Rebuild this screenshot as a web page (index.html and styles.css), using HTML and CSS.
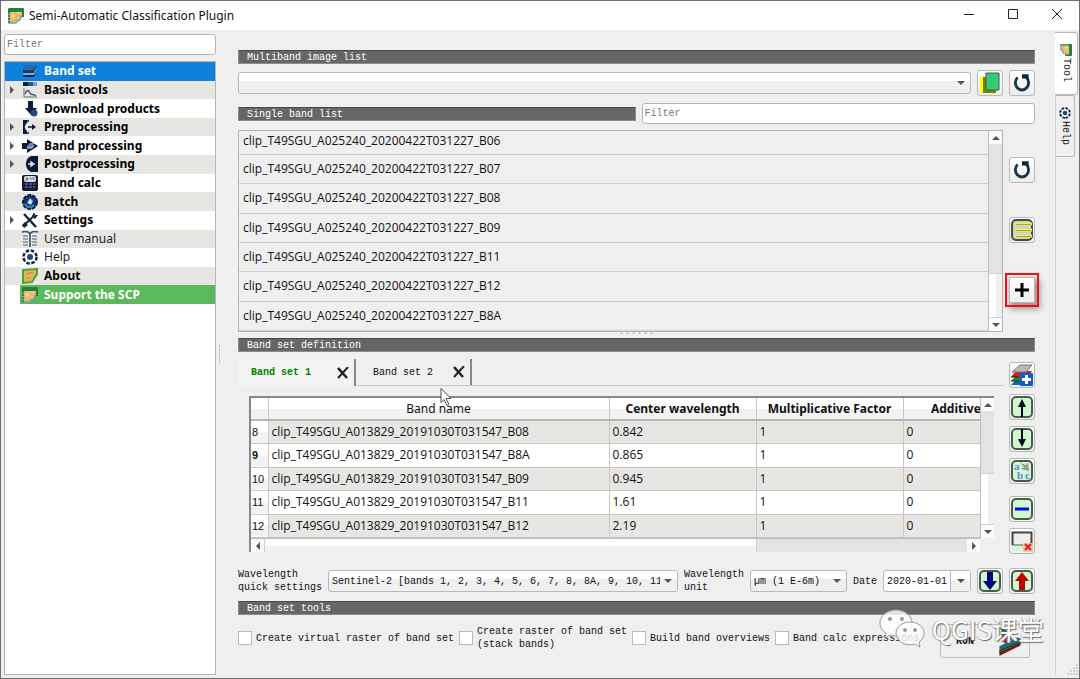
FILE: index.html
```html
<!DOCTYPE html>
<html lang="en">
<head>
  <meta charset="UTF-8">
  <title>Semi-Automatic Classification Plugin</title>
  <meta name="viewport" content="width=device-width, initial-scale=1.0">
  <link rel="stylesheet" href="styles.css">
</head>
<body>
  <svg class="defs" aria-hidden="true">
    <symbol id="logo" viewBox="0 0 16 16">
      <path d="M1 1h14v7l-2 1-1 3-3 1-1 2H1z" fill="#e9b565" stroke="#6fa3ae" stroke-width="1.500"/>
      <path d="M0 4V1l1-1h14l1 1v8h-2V4z" fill="#23823a"/>
      <path d="M1 4v11" stroke="#2f8a56" stroke-width="2" stroke-dasharray="2 1"/>
      <path d="M5 5v6M3 8h5M8 5h4M9 10h2" stroke="#fbe8b4"/>
    </symbol>
    <symbol id="bandset" viewBox="0 0 16 16">
      <path d="M1 11l4-4h10l-3 7H1z" fill="#0b2548"/>
      <path d="M1 10l4-3h10l-3 5H1z" fill="#7ba9df"/>
      <path d="M1 7l4-5h10l-3 8H1z" fill="#163e70"/>
      <path d="M1 7l4-5h10l-3 5z" fill="#2d66a6"/>
    </symbol>
    <symbol id="basic" viewBox="0 0 16 16">
      <path d="M1 0h5v4H1z" fill="#0b1d3c"/><path d="M6 0h5v4H6z" fill="#24508d"/><path d="M11 0h4v4h-4z" fill="#7b9dcb"/>
      <path d="M2 6v9h13" fill="none" stroke="#5e7186"/>
      <path d="M3 12c2-5 4-4 5-1s3 0 6 3" fill="none" stroke="#37536f" stroke-width="1.300"/>
    </symbol>
    <symbol id="download" viewBox="0 0 16 16">
      <path d="M6 0h5v7h4l-6 7-6-7h3z" fill="#0c1c35"/><circle cx="12" cy="12" r="3.500" fill="#254b73"/>
    </symbol>
    <symbol id="pre" viewBox="0 0 16 16">
      <path d="M1 1h4v3c-3 3-3 5 0 8v3H1z" fill="#0a1a33"/>
      <path d="M4 2h3M4 14h3M6 8h6" stroke="#0a1a33" stroke-width="1.500"/><path d="M10 5l4 3-4 3z" fill="#0a1a33"/>
    </symbol>
    <symbol id="proc" viewBox="0 0 16 16">
      <path d="M0 5h5V1l11 7-11 7v-4H0z" fill="#0b1c33"/>
      <path d="M5 8l3-3h4l-2 5H5z" fill="#6b88ad"/><path d="M5 10h5l2-3" fill="none" stroke="#c9d7e8"/>
    </symbol>
    <symbol id="post" viewBox="0 0 16 16">
      <path d="M16 0v16h-6c-8-1-8-15 0-16z" fill="#0a1a33"/><path d="M6 8h5M9 6l3 2-3 2z" fill="#d4e0e8" stroke="#d4e0e8" stroke-width="1.500"/>
    </symbol>
    <symbol id="calc" viewBox="0 0 16 16">
      <rect x="0" y="0" width="16" height="16" rx="2" fill="#141b32"/>
      <rect x="2" y="1" width="12" height="6" rx="2" fill="#d8dde4"/>
      <path d="M4 3h2v2H4zM8 3h1v2M10 3h2v2" fill="none" stroke="#68718b"/>
      <path d="M3 9h3M7 9h3M11 9h2M3 12h3M7 12h3M11 12h2" stroke="#4a5090" stroke-width="2"/>
    </symbol>
    <symbol id="batch" viewBox="0 0 16 16">
      <circle cx="8" cy="8" r="7" fill="#123768" stroke="#0a2142" stroke-width="2" stroke-dasharray="4 1"/>
      <path d="M3 10c2 4 6 4 9 1" fill="none" stroke="#3b82ce" stroke-width="2"/>
      <path d="M8 4l3 3-2 4-4-2z" fill="#9cc7f0"/><circle cx="8" cy="8" r="1.500" fill="#fff"/>
    </symbol>
    <symbol id="tools" viewBox="0 0 16 16">
      <path d="M2 2l12 13" stroke="#172536" stroke-width="2.500"/><path d="M1 14L13 3" stroke="#172536" stroke-width="2"/>
      <path d="M0 13l3-3 3 3-4 3zM10 4l2-4 1 3 3 0-3 4z" fill="#172536"/>
    </symbol>
    <symbol id="manual" viewBox="0 0 16 16">
      <path d="M0 1c4-1 7 0 8 2 1-2 4-3 8-2M8 3v13" fill="none" stroke="#365064" stroke-width="1.600"/>
      <path d="M1 5h5M1 8h5M1 11h5M1 14h5M10 5h5M10 8h5M10 11h5M10 14h5" stroke="#7f929c" stroke-width="1.500"/>
    </symbol>
    <symbol id="helpring" viewBox="0 0 16 16">
      <circle cx="8" cy="8" r="6.500" fill="none" stroke="#102642" stroke-width="2.500" stroke-dasharray="3.500 1.600"/>
      <circle cx="8" cy="8" r="3" fill="#23466b"/>
    </symbol>
    <symbol id="about" viewBox="0 0 16 16">
      <path d="M1 2l14-1v5l-5 8-9 1z" fill="#e4b25c" stroke="#4ba72f" stroke-width="2"/>
      <path d="M4 6l3-1 4 0M5 10l3 0" stroke="#c48b48" fill="none"/>
    </symbol>
    <symbol id="reload" viewBox="0 0 20 20">
      <path d="M6 5a6 6.500 0 1 0 8 0" fill="none" stroke="#17384c" stroke-width="2.600"/>
      <path d="M10 2h6v6l-2-2h-4z" fill="#10283a"/>
    </symbol>
    <symbol id="cross" viewBox="0 0 12 12">
      <path d="M1 1l9 10" stroke="#222" stroke-width="2.600"/><path d="M11 0L1 11" stroke="#222" stroke-width="2"/>
    </symbol>
  </svg>

  <div class="window">
    <header class="titlebar">
      <svg class="icon"><use href="#logo"/></svg>
      <h1>Semi-Automatic Classification Plugin</h1>
      <button class="win-btn" aria-label="Minimize"><svg viewBox="0 0 12 12"><path d="M1 6.500h10"/></svg></button>
      <button class="win-btn" aria-label="Maximize"><svg viewBox="0 0 12 12"><path d="M1.500 1.500h9v9h-9z"/></svg></button>
      <button class="win-btn" aria-label="Close"><svg viewBox="0 0 12 12"><path d="M1 1l10 10M11 1L1 11"/></svg></button>
    </header>

    <div class="content">
      <aside class="sidebar">
        <input type="text" class="text-input" placeholder="Filter" aria-label="Filter tools">
        <nav class="tree">
          <ul>
            <li class="selected"><a href="#"><svg class="icon"><use href="#bandset"/></svg>Band set</a></li>
            <li class="branch"><a href="#"><svg class="icon"><use href="#basic"/></svg>Basic tools</a></li>
            <li><a href="#"><svg class="icon"><use href="#download"/></svg>Download products</a></li>
            <li class="branch"><a href="#"><svg class="icon"><use href="#pre"/></svg>Preprocessing</a></li>
            <li class="branch"><a href="#"><svg class="icon"><use href="#proc"/></svg>Band processing</a></li>
            <li class="branch"><a href="#"><svg class="icon"><use href="#post"/></svg>Postprocessing</a></li>
            <li><a href="#"><svg class="icon"><use href="#calc"/></svg>Band calc</a></li>
            <li><a href="#"><svg class="icon"><use href="#batch"/></svg>Batch</a></li>
            <li class="branch"><a href="#"><svg class="icon"><use href="#tools"/></svg>Settings</a></li>
            <li class="light"><a href="#"><svg class="icon"><use href="#manual"/></svg>User manual</a></li>
            <li class="light"><a href="#"><svg class="icon"><use href="#helpring"/></svg>Help</a></li>
            <li><a href="#"><svg class="icon"><use href="#about"/></svg>About</a></li>
            <li class="support"><a href="#"><svg class="icon"><use href="#logo"/></svg>Support the SCP</a></li>
          </ul>
        </nav>
      </aside>
      <div class="splitter"></div>

      <main class="main">
        <h2 class="section-title">Multiband image list</h2>
        <div class="row image-row">
          <div class="combo grow"><select aria-label="Multiband image list"><option></option></select></div>
          <button class="tool-btn" aria-label="Open file">
            <svg viewBox="0 0 22 22"><path d="M1 5h16v16H1z" fill="#808000"/><path d="M1 5h3v16H1z" fill="#ffff00"/><path d="M7 1h13v17H7z" fill="#38c878" stroke="#386050"/></svg>
          </button>
          <button class="tool-btn" aria-label="Refresh images"><svg><use href="#reload"/></svg></button>
        </div>

        <div class="row list-head">
          <h2 class="section-title grow">Single band list</h2>
          <input type="text" class="text-input grow" placeholder="Filter" aria-label="Filter bands">
        </div>

        <div class="row list-row">
          <div class="band-list grow">
            <ul>
              <li>clip_T49SGU_A025240_20200422T031227_B06</li>
              <li>clip_T49SGU_A025240_20200422T031227_B07</li>
              <li>clip_T49SGU_A025240_20200422T031227_B08</li>
              <li>clip_T49SGU_A025240_20200422T031227_B09</li>
              <li>clip_T49SGU_A025240_20200422T031227_B11</li>
              <li>clip_T49SGU_A025240_20200422T031227_B12</li>
              <li>clip_T49SGU_A025240_20200422T031227_B8A</li>
            </ul>
            <div class="scrollbar">
              <i class="arrow up"></i><span class="track"></span><span class="thumb"></span><i class="arrow down"></i>
            </div>
          </div>
          <div class="list-tools">
            <button class="tool-btn" aria-label="Refresh list"><svg><use href="#reload"/></svg></button>
            <button class="tool-btn" aria-label="Select all">
              <svg viewBox="0 0 22 22"><rect x="1" y="1" width="20" height="20" rx="4" fill="#d0d0c8" stroke="#4a4a4a" stroke-width="2"/><path d="M4 5h17M4 11h17M4 17h17" stroke="#f3ee48" stroke-width="3"/><path d="M5 5.500h15M5 11.500h15M5 17.500h15" stroke="#a7a75a"/></svg>
            </button>
            <button class="tool-btn marked" aria-label="Add band to band set">
              <svg viewBox="0 0 22 22"><path d="M11 4v14M4 11h14" stroke="#050505" stroke-width="3"/></svg>
            </button>
          </div>
        </div>
        <div class="grip">······</div>

        <h2 class="section-title">Band set definition</h2>
        <div class="row set-row">
          <div class="set-panel grow">
            <div class="tabs">
              <div class="tab active"><button class="tab-name">Band set 1</button><button class="tab-close" aria-label="Close band set 1"><svg><use href="#cross"/></svg></button></div>
              <div class="tab"><button class="tab-name">Band set 2</button><button class="tab-close" aria-label="Close band set 2"><svg><use href="#cross"/></svg></button></div>
            </div>
            <div class="table-box">
              <div class="table-view">
                <table>
                  <colgroup><col class="c-num"><col class="c-name"><col class="c-val"><col class="c-val"><col class="c-val"></colgroup>
                  <thead>
                    <tr><td></td><th class="plain">Band name</th><th>Center wavelength</th><th>Multiplicative Factor</th><th>Additive Factor</th></tr>
                  </thead>
                  <tbody>
                    <tr><th>8</th><td>clip_T49SGU_A013829_20191030T031547_B08</td><td>0.842</td><td>1</td><td>0</td></tr>
                    <tr><th class="current">9</th><td>clip_T49SGU_A013829_20191030T031547_B8A</td><td>0.865</td><td>1</td><td>0</td></tr>
                    <tr><th>10</th><td>clip_T49SGU_A013829_20191030T031547_B09</td><td>0.945</td><td>1</td><td>0</td></tr>
                    <tr><th>11</th><td>clip_T49SGU_A013829_20191030T031547_B11</td><td>1.61</td><td>1</td><td>0</td></tr>
                    <tr><th>12</th><td>clip_T49SGU_A013829_20191030T031547_B12</td><td>2.19</td><td>1</td><td>0</td></tr>
                  </tbody>
                </table>
              </div>
              <div class="scrollbar">
                <i class="arrow up"></i><span class="track"></span><span class="thumb"></span><i class="arrow down"></i>
              </div>
              <div class="scrollbar horizontal">
                <i class="arrow left"></i><span class="thumb"></span><span class="track"></span><i class="arrow right"></i>
              </div>
            </div>
            <svg class="cursor" viewBox="0 0 12 19"><path d="M1 1v14l3-3 3 6 2-1-3-6h5z" fill="#fff" stroke="#46505e"/></svg>
          </div>
          <div class="set-tools">
            <button class="tool-btn" aria-label="Add band set">
              <svg viewBox="0 0 22 22"><path d="M0 21l5-5h14l-3 5z" fill="#1566b8"/><path d="M0 17l5-5h14l-3 5z" fill="#18901f"/><path d="M0 13l5-6h16l-4 6z" fill="#e01818"/><path d="M1 8l8-7h12l-6 7z" fill="#b9b9b9" stroke="#777"/><path d="M0 13h8M0 17h8" stroke="#222"/><rect x="9" y="9" width="13" height="13" rx="1" fill="#0b5ed0"/><path d="M15.500 11v9M11 15.500h9" stroke="#fff" stroke-width="3"/></svg>
            </button>
            <button class="tool-btn" aria-label="Move band up">
              <svg viewBox="0 0 22 22"><rect class="pad" x="1" y="1" width="20" height="20" rx="4"/><path d="M11 3l4 8h-3v10h-2V11H7z" fill="#050a25"/></svg>
            </button>
            <button class="tool-btn" aria-label="Move band down">
              <svg viewBox="0 0 22 22"><rect class="pad" x="1" y="1" width="20" height="20" rx="4"/><path d="M11 19l4-8h-3V1h-2v10H7z" fill="#050a25"/></svg>
            </button>
            <button class="tool-btn" aria-label="Sort by name">
              <svg viewBox="0 0 22 22"><rect class="pad" x="1" y="1" width="20" height="20" rx="4"/><text x="3" y="10">a</text><text x="6" y="19">b</text><text x="14" y="19">c</text><path d="M9 3l6 2 2-2 1 8-8-2 3-2z" fill="#999"/></svg>
            </button>
            <button class="tool-btn spaced" aria-label="Remove band">
              <svg viewBox="0 0 22 22"><rect class="pad" x="1" y="1" width="20" height="20" rx="4"/><path d="M4 11h14" stroke="#0505f5" stroke-width="3"/></svg>
            </button>
            <button class="tool-btn" aria-label="Clear band set">
              <svg viewBox="0 0 22 22"><path d="M1 16h11v5H1z" fill="#cff8cf"/><path d="M1.500 15V2.500h19V14" fill="#eeeeea" stroke="#444" stroke-width="2"/><path d="M1 15h12" stroke="#555"/><rect x="12" y="13" width="10" height="9" fill="#f6c3a8"/><path d="M14 14l6 6M20 14l-6 6" stroke="#e21b1b" stroke-width="2"/></svg>
            </button>
          </div>
        </div>

        <div class="row wave-row">
          <label for="wave">Wavelength<br>quick settings</label>
          <div class="combo grow"><select id="wave"><option>Sentinel-2 [bands 1, 2, 3, 4, 5, 6, 7, 8, 8A, 9, 10, 11, 12]</option></select></div>
          <label for="unit">Wavelength<br>unit</label>
          <div class="combo unit"><select id="unit"><option>µm (1 E-6m)</option></select></div>
          <label for="date">Date</label>
          <div class="date-box"><input type="text" id="date" value="2020-01-01"><button aria-label="Open calendar"><i class="arrow down"></i></button></div>
          <button class="tool-btn" aria-label="Import band set">
            <svg viewBox="0 0 22 22"><rect class="pad" x="1" y="1" width="20" height="20" rx="4"/><path d="M8 2h6v9h4l-7 9-7-9h4z" fill="#000080"/></svg>
          </button>
          <button class="tool-btn" aria-label="Export band set">
            <svg viewBox="0 0 22 22"><rect class="pad" x="1" y="1" width="20" height="20" rx="4"/><path d="M8 20h6v-9h4l-7-9-7 9h4z" fill="#c40000"/></svg>
          </button>
        </div>

        <h2 class="section-title">Band set tools</h2>
        <div class="row option-row">
          <label><input type="checkbox">Create virtual raster of band set</label>
          <label><input type="checkbox"><span>Create raster of band set<br>(stack bands)</span></label>
          <label><input type="checkbox">Build band overviews</label>
          <label><input type="checkbox">Band calc expressions</label>
          <button class="run-btn">RUN
            <svg viewBox="0 0 26 34"><path d="M1 1l8 4 8 10-8 2z" fill="#1c6478"/><path d="M1 5l7 8 4 5-5 2z" fill="#a52a2a"/><path d="M1 23l20-10 4 1v5L1 30z" fill="#1f6a80"/><path d="M1 27l24-10v2L1 31z" fill="#2f7d32"/><path d="M1 30l24-11v3L1 34z" fill="#a01818"/><path d="M1 28l24-10M1 31l24-11" stroke="#222" fill="none"/></svg>
          </button>
          <div class="watermark">
            <svg viewBox="0 0 46 40">
              <path d="M17 1c9 0 16 6 16 13s-7 13-16 13c-2 0-4 0-6-1l-5 3 1-5c-4-2-6-6-6-10C1 7 8 1 17 1z" class="bubble"/>
              <path d="M31 13c8 0 14 5 14 11 0 4-2 7-5 9l1 5-5-3c-10 3-19-3-19-11 0-6 6-11 14-11z" class="bubble"/>
              <circle cx="11" cy="10" r="2"/><circle cx="23" cy="10" r="2"/><circle cx="26" cy="21" r="2"/><circle cx="36" cy="21" r="2"/>
            </svg>
            <span>QGIS课堂</span>
          </div>
        </div>
      </main>

      <div class="side-tabs">
        <button class="side-tab active"><svg><use href="#logo"/></svg>Tool</button>
        <button class="side-tab"><svg><use href="#helpring"/></svg>Help</button>
        <svg class="size-grip" viewBox="0 0 11 11"><path d="M9 1h2M6 4h5M3 7h8M0 10h11"/></svg>
      </div>
    </div>
  </div>
</body>
</html>
```
FILE: styles.css
```css
* {
  box-sizing: border-box;
}
body {
  margin: 0;
  font-family: "Liberation Mono", monospace;
  font-size: 10px;
  line-height: 13px;
  color: #111;
  background: #efefef;
}
ul {
  list-style: none;
  margin: 0;
  padding: 0;
}
h1, h2 {
  margin: 0;
  font-weight: normal;
}
button, input, select {
  font: inherit;
  color: inherit;
  margin: 0;
  padding: 0;
}
button {
  border: none;
  background: none;
}
.defs {
  display: none;
}
.window {
  display: flex;
  flex-direction: column;
  min-height: 100vh;
  border: 1px solid #6f6d6f;
}
.icon {
  width: 16px;
  height: 16px;
  flex: none;
}

/* title bar */
.titlebar {
  display: flex;
  align-items: center;
  height: 29px;
  padding-left: 7px;
  background: #fff;
}
.titlebar h1 {
  flex: 1;
  margin-left: 5px;
  font: 12px/16px "Noto Sans", sans-serif;
}
.win-btn {
  width: 44px;
  height: 28px;
}
.win-btn svg {
  width: 12px;
  height: 12px;
  fill: none;
  stroke: #222;
}

.content {
  flex: 1;
  display: flex;
}
.grow {
  flex: 1;
  min-width: 0;
}
.row {
  display: flex;
}
.text-input {
  height: 21px;
  padding: 0 2px;
  border: 1px solid #b4b4b4;
  border-radius: 3px;
  background: #fff;
}
.text-input::placeholder {
  color: #777;
  opacity: 1;
}

/* sidebar */
.sidebar {
  display: flex;
  flex-direction: column;
  width: 215px;
  padding: 4px 0 3px 3px;
}
.tree {
  flex: 1;
  margin-top: 6px;
  border: 1px solid #b4b4b4;
  background: #fff;
  font: bold 12px/16px "Noto Sans", sans-serif;
}
.tree ul {
  display: grid;
  grid-template-rows: repeat(13, 1fr);
  height: 242px;
}
.tree li {
  display: flex;
  padding-left: 15px;
}
.tree li:nth-child(even) {
  background: #e8e6e2;
}
.tree li.branch {
  padding-left: 0;
}
.tree li.branch::before {
  content: "";
  align-self: center;
  margin: 0 6px 0 5px;
  border: 4px solid transparent;
  border-left: 4px solid #555;
  border-right: 0;
}
.tree a {
  flex: 1;
  display: flex;
  align-items: center;
  gap: 6px;
  padding-left: 2px;
  color: #000;
  text-decoration: none;
}
.tree li.selected {
  background: #0f80dc;
}
.tree li.selected a, .tree li.support a {
  color: #fff;
}
.tree li.light a {
  font-weight: normal;
  color: #222;
}
.tree li.support a {
  background: #5cb85c;
}
.splitter {
  align-self: center;
  width: 4px;
  height: 18px;
  margin-right: 3px;
  border-right: 1px dotted #aaa;
}

/* main panel */
.main {
  flex: 1;
  min-width: 0;
  padding: 20px 20px 0 15px;
}
.section-title {
  height: 14px;
  padding-left: 8px;
  border: 1px solid #8c8c8c;
  border-top-color: #4a4a4a;
  background: #666;
  color: #fff;
  font-size: 10px;
  line-height: 14px;
}
.tool-btn {
  display: flex;
  align-items: center;
  justify-content: center;
  flex: none;
  width: 26px;
  height: 26px;
  border: 1px solid #b8b8b8;
  border-radius: 3px;
  background: linear-gradient(#fff, #ededed);
}
.tool-btn svg {
  width: 22px;
  height: 22px;
}
.tool-btn text {
  font: bold 11px "Liberation Serif", serif;
  fill: #5b85e0;
}
.pad {
  fill: #cff8cf;
  stroke: #4c5a4c;
  stroke-width: 2;
}
.image-row {
  align-items: center;
  gap: 6px;
  margin-top: 6px;
}
.combo {
  position: relative;
  height: 22px;
}
.combo select {
  appearance: none;
  width: 100%;
  height: 100%;
  padding: 0 17px 0 3px;
  border: 1px solid #b8b8b8;
  border-radius: 3px;
  background: linear-gradient(#fff 40%, #efefef 41%);
}
.combo::after {
  content: "";
  position: absolute;
  top: 9px;
  right: 6px;
  border: 4px solid transparent;
  border-top-color: #555;
  border-bottom: 0;
}
.list-head {
  align-items: center;
  gap: 6px;
  margin-top: 7px;
}
.list-row {
  gap: 6px;
  margin-top: 6px;
}
.band-list {
  display: flex;
  height: 202px;
  border: 1px solid #b4b4b4;
}
.band-list ul {
  flex: 1;
  display: grid;
  grid-template-rows: 24px repeat(6, 1fr);
  font: 12px/16px "Open Sans", "Noto Sans", sans-serif;
}
.band-list li {
  display: flex;
  align-items: center;
  padding-left: 4px;
  border-bottom: 1px solid #cfcfcf;
}
.band-list li:first-child {
  padding-bottom: 4px;
}
.list-tools {
  display: flex;
  flex-direction: column;
  gap: 34px;
  padding-top: 27px;
}
.marked {
  border-radius: 0;
  outline: 2px solid #ee1111;
  outline-offset: 2px;
  box-shadow: 3px 4px 6px 2px #999;
}
.grip {
  height: 6px;
  line-height: 4px;
  text-align: center;
  color: #aaa;
}

/* scrollbars */
.scrollbar {
  display: flex;
  flex-direction: column;
  width: 14px;
  border-left: 1px solid #bcbcbc;
  background: #e3e3e3;
}
.scrollbar .arrow {
  display: flex;
  align-items: center;
  justify-content: center;
  flex: none;
  width: 13px;
  height: 13px;
  background: #fafafa;
}
.arrow::before {
  content: "";
  display: block;
  border: 4px solid transparent;
}
.arrow.up::before {
  border-bottom-color: #555;
  border-top: 0;
}
.arrow.down::before {
  border-top-color: #555;
  border-bottom: 0;
}
.arrow.left::before {
  border-right-color: #555;
  border-left: 0;
}
.arrow.right::before {
  border-left-color: #555;
  border-right: 0;
}
.track {
  flex: 3;
}
.thumb {
  flex: 1;
  border: 1px solid #d0d0d0;
  border-width: 1px 0;
  background: linear-gradient(to right, #fff 50%, #f0f0f0 51%);
}

/* band set tabs and table */
.set-row {
  gap: 5px;
}
.set-panel {
  position: relative;
  padding-top: 7px;
}
.tabs {
  display: flex;
  height: 27px;
  border-bottom: 1px solid #c8c8c8;
}
.tab {
  display: flex;
  align-items: center;
  justify-content: space-between;
  width: 116px;
  padding: 0 5px 0 17px;
  border-right: 2px solid #888;
}
.tab.active {
  width: 118px;
  padding-left: 13px;
  margin-bottom: -1px;
  background: #f3f3f3;
  color: #008000;
  font-weight: bold;
}
.tab-close {
  height: 12px;
}
.tab-close svg {
  display: block;
  width: 12px;
  height: 12px;
}
.table-box {
  display: grid;
  grid-template: 140px 14px / minmax(0, 1fr) 14px;
  margin: 10px 10px 0 11px;
  border-top: 2px solid #888;
  border-left: 2px solid #888;
}
.table-view {
  overflow: hidden;
  background: #fff;
}
table {
  table-layout: fixed;
  width: 799px;
  border-collapse: collapse;
  font: 12px/16px "Open Sans", "Noto Sans", sans-serif;
}
.c-num {
  width: 17px;
}
.c-name {
  width: 341px;
}
.c-val {
  width: 147px;
}
td, th {
  height: 23px;
  padding: 0 3px;
  border: 1px solid #c6c6c6;
  border-left: none;
  border-top: none;
  text-align: left;
  white-space: nowrap;
}
thead td, thead th {
  height: 22px;
  border-bottom: 2px solid #b5b5b5;
  background: linear-gradient(#fff 50%, #f2f2f2 51%);
  text-align: center;
  font: bold 12px/16px "Noto Sans", sans-serif;
}
thead .plain {
  font-weight: normal;
}
tbody th {
  padding: 0 1px;
  background: linear-gradient(#fff 50%, #f2f2f2 51%);
  font: 11px/16px "Liberation Sans", sans-serif;
}
tbody th.current {
  font-weight: bold;
}
tbody tr:nth-child(odd) td {
  background: #e8e6e2;
}
tbody tr:nth-child(even) td {
  height: 24px;
}
.table-box .scrollbar .track {
  flex: 5;
}
.table-box .scrollbar .thumb {
  flex: 4;
}
.scrollbar.horizontal {
  flex-direction: row;
  width: auto;
  border-left: none;
  border-top: 1px solid #bcbcbc;
}
.table-box .horizontal .thumb {
  flex: 7;
  border-width: 0 1px;
  background: linear-gradient(#fff 50%, #f0f0f0 51%);
}
.table-box .horizontal .track {
  flex: 3;
}
.cursor {
  position: absolute;
  top: 35px;
  left: 202px;
  width: 12px;
  height: 20px;
}
.set-tools {
  display: flex;
  flex-direction: column;
  gap: 6px;
  padding-top: 10px;
}
.set-tools .spaced {
  margin-top: 6px;
}

/* wavelength settings */
.wave-row {
  align-items: center;
  gap: 6px;
  margin: 14px 0 7px;
}
.unit {
  width: 97px;
}
.date-box {
  display: flex;
  width: 88px;
  height: 22px;
  border: 1px solid #b8b8b8;
  border-radius: 3px;
  background: #fff;
}
.date-box input {
  flex: 1;
  min-width: 0;
  padding-left: 3px;
  border: none;
  background: none;
}
.date-box button {
  display: flex;
  align-items: center;
  justify-content: center;
  width: 20px;
  border-left: 1px solid #b8b8b8;
  background: linear-gradient(#fff 50%, #efefef 51%);
}

/* band set tools */
.option-row {
  position: relative;
  align-items: center;
  gap: 5px;
  height: 46px;
}
.option-row label {
  display: flex;
  align-items: center;
  gap: 4px;
  white-space: nowrap;
}
.option-row input {
  appearance: none;
  width: 14px;
  height: 14px;
  border: 1px solid #bbb;
  background: #fff;
}
.run-btn {
  display: flex;
  align-items: center;
  justify-content: space-between;
  width: 90px;
  height: 34px;
  margin: 6px 5px 0 auto;
  padding: 0 6px 0 15px;
  border: 1px solid #bbb;
  border-radius: 3px;
  background: #efefef;
  font-weight: bold;
}
.run-btn svg {
  width: 26px;
  height: 30px;
}
.watermark {
  position: absolute;
  right: -9px;
  bottom: 12px;
  display: flex;
  align-items: center;
  gap: 7px;
  color: #fff;
  font: 26px/36px "Noto Sans CJK SC", sans-serif;
  text-shadow: 1px 1px 1px #666, -1px 0 1px #aaa;
}
.watermark svg {
  width: 46px;
  height: 40px;
  fill: #999;
}
.bubble {
  fill: #fff;
  fill-opacity: 0.8;
  stroke: #999;
}

/* right tabs */
.side-tabs {
  position: relative;
  display: flex;
  flex-direction: column;
  width: 24px;
  margin: 2px 0 3px;
  background: linear-gradient(to right, #cfcfcf 1px, transparent 1px);
}
.side-tab {
  writing-mode: vertical-rl;
  display: flex;
  align-items: center;
  justify-content: center;
  gap: 2px;
  width: 19px;
  height: 62px;
  border: 1px solid #b8b8b8;
  border-left: none;
  border-radius: 0 3px 3px 0;
  margin-left: 1px;
}
.side-tab.active {
  width: 23px;
  height: 63px;
  margin-left: 0;
  background: #fff;
}
.side-tab svg {
  width: 12px;
  height: 12px;
  transform: rotate(90deg);
}
.size-grip {
  position: absolute;
  right: 1px;
  bottom: 0;
  width: 11px;
  height: 11px;
  stroke: #b0b0b0;
  stroke-dasharray: 2 1;
}
```
